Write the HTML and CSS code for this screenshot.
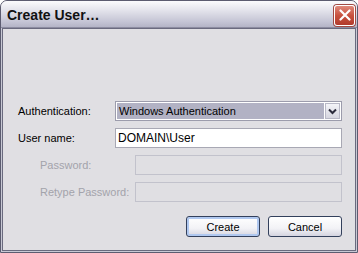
FILE: index.html
```html
<!DOCTYPE html>
<html lang="en">
<head>
    <meta charset="UTF-8">
    <title>Create User...</title>
    <link rel="stylesheet" href="styles.css">
</head>
<body>
    <div class="window">
        <div class="titlebar">
            <span class="title">Create User…</span>
            <button class="close" aria-label="Close">
                <svg width="12" height="12" viewBox="0 0 12 12">
                    <path d="M1.5 1.5 L10.5 10.5 M10.5 1.5 L1.5 10.5" stroke="#fff" stroke-width="2.2" stroke-linecap="round"/>
                </svg>
            </button>
        </div>
        <div class="client">
            <div class="row">
                <label>Authentication:</label>
                <div class="select">
                    <span class="select-value">Windows Authentication</span>
                    <span class="select-btn">
                        <svg width="9" height="7" viewBox="0 0 9 7">
                            <polyline points="1,1.5 4.5,5 8,1.5" fill="none" stroke="#2c2c3c" stroke-width="2"/>
                        </svg>
                    </span>
                </div>
            </div>
            <div class="row">
                <label for="user">User name:</label>
                <input id="user" class="field" value="DOMAIN\User">
            </div>
            <div class="row sub">
                <label class="disabled">Password:</label>
                <input class="field" disabled>
            </div>
            <div class="row sub">
                <label class="disabled">Retype Password:</label>
                <input class="field" disabled>
            </div>
            <div class="buttons">
                <button class="btn default">Create</button>
                <button class="btn">Cancel</button>
            </div>
        </div>
    </div>
</body>
</html>
```
FILE: styles.css
```css
body {
    margin: 0;
    background-color: #fff;
    font-family: 'Liberation Sans', Arial, sans-serif;
}
.window {
    width: 358px;
    height: 253px;
    box-sizing: border-box;
    display: flex;
    flex-direction: column;
    background-color: #c8c8d4;
    border: 1px solid #5c5c70;
    border-radius: 7px 7px 0 0;
    overflow: hidden;
}
.titlebar {
    height: 26px;
    display: flex;
    align-items: center;
    justify-content: space-between;
    padding: 0 2px 0 6px;
    background: linear-gradient(#fbfbfd 0%, #e4e4ec 35%, #c4c4d4 80%, #b4b4c6 100%);
    border-bottom: 1px solid #8c8ca0;
}
.title {
    font-size: 14px;
    font-weight: bold;
    color: #111;
    padding-top: 2px;
}
.close {
    width: 21px;
    height: 21px;
    padding: 0;
    margin-top: 2px;
    display: flex;
    align-items: center;
    justify-content: center;
    border: 1px solid #fff;
    border-radius: 3px;
    background: linear-gradient(#e08a7c, #c8523f 50%, #b03a2c);
    box-shadow: 0 0 0 1px #a04a44;
}
.client {
    flex: 1;
    margin: 0 1px 1px;
    border: 1px solid #6a6a7e;
    background-color: #e0dfe3;
    padding: 72px 13px 0 15px;
    display: flex;
    flex-direction: column;
    gap: 7px;
}
.row {
    display: flex;
    align-items: center;
    height: 20px;
}
.row label {
    flex: 0 0 97px;
    font-size: 11px;
    color: #000;
}
.row.sub {
    padding-left: 22px;
}
.row.sub label {
    flex-basis: 95px;
}
label.disabled {
    color: #a3a3ab;
}
.select {
    flex: 1;
    height: 20px;
    box-sizing: border-box;
    display: flex;
    border: 1px solid #9c9cac;
    background-color: #fff;
    padding: 1px;
}
.select-value {
    flex: 1;
    background-color: #b2b2c4;
    font-size: 11px;
    line-height: 16px;
    padding-left: 2px;
    color: #000;
}
.select-btn {
    width: 15px;
    margin-left: 1px;
    display: flex;
    align-items: center;
    justify-content: center;
    background: linear-gradient(#f4f4f8, #d6d6e0);
    border: 1px solid #b8b8c6;
    box-sizing: border-box;
}
.field {
    flex: 1;
    height: 20px;
    box-sizing: border-box;
    margin: 0;
    border: 1px solid #a8a8b4;
    background-color: #fff;
    font-family: 'Liberation Sans', Arial, sans-serif;
    font-size: 12px;
    padding: 0 2px;
    color: #000;
}
.field:disabled {
    background-color: #e0dfe3;
    border-color: #c2c2cc;
}
.buttons {
    display: flex;
    justify-content: flex-end;
    gap: 8px;
    margin-top: 7px;
}
.btn {
    width: 74px;
    height: 21px;
    padding: 0;
    font-family: 'Liberation Sans', Arial, sans-serif;
    font-size: 11px;
    color: #000;
    border: 1px solid #33405c;
    border-radius: 3px;
    background: linear-gradient(#ffffff, #f2f2f6 60%, #d4d4e0);
}
.btn.default {
    box-shadow: inset 0 0 0 2px #b0c8f0;
}
```
